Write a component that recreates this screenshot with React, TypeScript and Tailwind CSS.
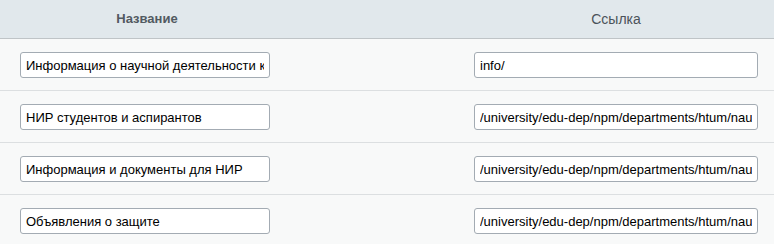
const rows = [
  { name: 'Информация о научной деятельности кафедры', link: 'info/' },
  { name: 'НИР студентов и аспирантов', link: '/university/edu-dep/npm/departments/htum/nauka/nir/' },
  { name: 'Информация и документы для НИР', link: '/university/edu-dep/npm/departments/htum/nauka/docs/' },
  { name: 'Объявления о защите', link: '/university/edu-dep/npm/departments/htum/nauka/defense/' },
];

export default function App() {
  return (
    <div className="w-[774px] h-[244px] overflow-hidden bg-[#f8f9f9] font-['Liberation_Sans',Arial,sans-serif]">
      <div className="w-[778px]">
        {/* Header */}
        <div className="grid grid-cols-[294px_160px_324px] h-[39px] bg-[#e1e8ec] border-b border-[#bfc4c7] text-[13px] font-bold text-[#525a61]">
          <div className="flex items-center justify-center">Название</div>
          <div />
          <div className="flex items-center justify-center font-normal text-[#4a5259] text-[14px]">Ссылка</div>
        </div>

        {rows.map((r) => (
          <div
            key={r.name}
            className="grid grid-cols-[294px_160px_324px] h-[52px] border-b border-[#dcdfe1] items-start pt-[13px]"
          >
            <div className="pl-[20px]">
              <input
                readOnly
                value={r.name}
                className="w-[250px] h-[26px] bg-white border border-[#a3abb3] rounded-[3px] px-[5px] text-[13px] text-black outline-none"
              />
            </div>
            <div />
            <div className="pl-[20px]">
              <input
                readOnly
                value={r.link}
                className="w-[284px] h-[26px] bg-white border border-[#a3abb3] rounded-[3px] px-[5px] text-[13px] text-black outline-none"
              />
            </div>
          </div>
        ))}
      </div>
    </div>
  );
}
